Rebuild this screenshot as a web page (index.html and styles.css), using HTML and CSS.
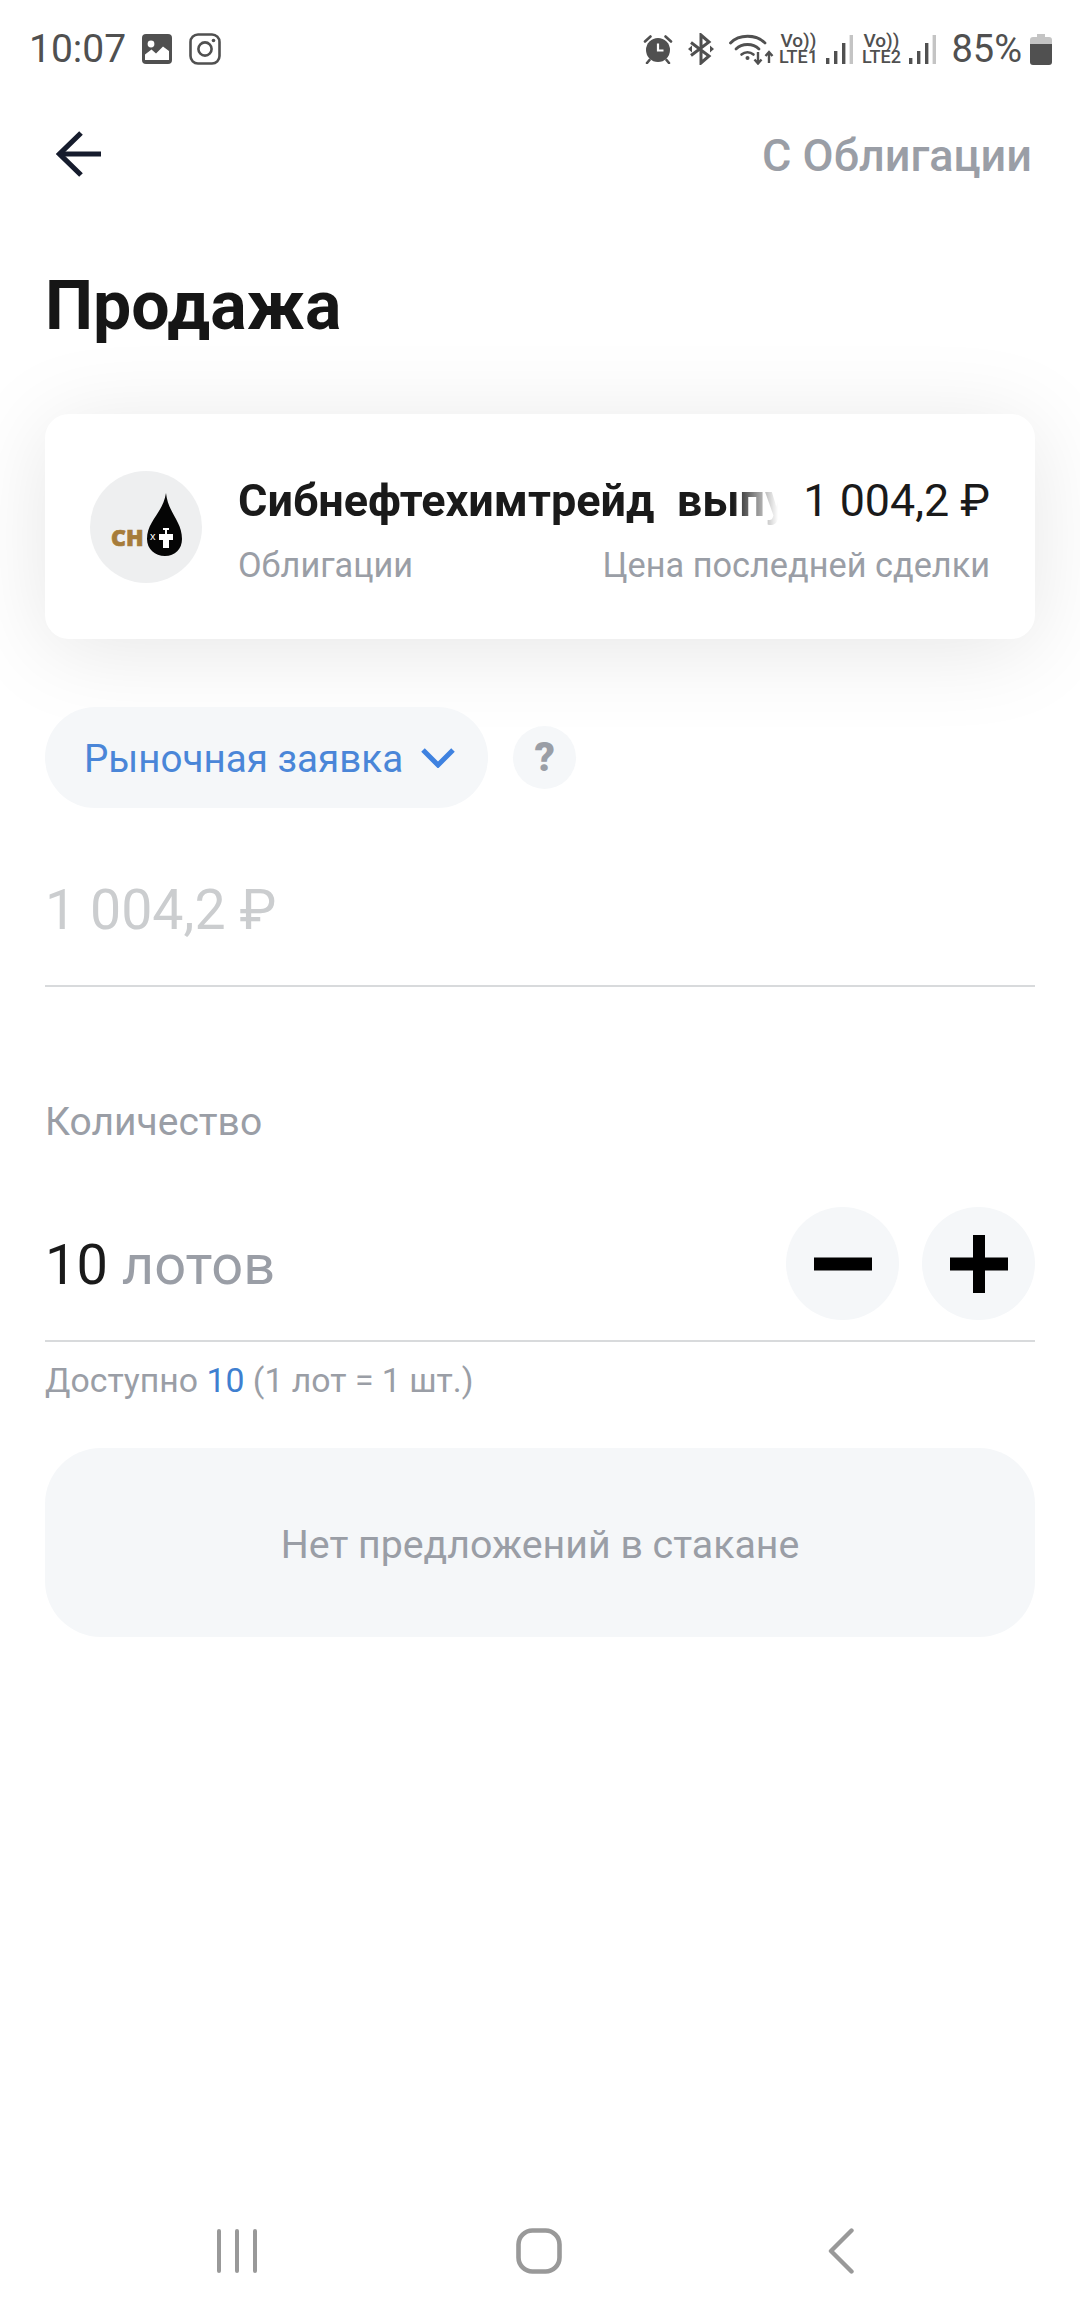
FILE: index.html
```html
<!DOCTYPE html>
<html lang="ru">
<head>
<meta charset="UTF-8">
<meta name="viewport" content="width=device-width, initial-scale=1.0">
<title>Продажа</title>
<link rel="stylesheet" href="styles.css">
</head>
<body>
<div class="app">

  <!-- статус-бар -->
  <div class="status">
    <span class="clock">10:07</span>
    <svg class="st-photo" width="30" height="30" viewBox="0 0 30 30">
      <rect width="30" height="30" rx="4" fill="#505050"/>
      <circle cx="9" cy="10" r="3.4" fill="#fff"/>
      <path d="M3 26V20.5L9.5 15.5 14 19.5 21 12.5 27 17V26Z" fill="#fff"/>
    </svg>
    <svg class="st-insta" width="32" height="32" viewBox="0 0 32 32" fill="none" stroke="#505050">
      <rect x="1.5" y="1.5" width="29" height="29" rx="7.5" stroke-width="2.6"/>
      <circle cx="16" cy="16" r="6.6" stroke-width="2.6"/>
      <circle cx="24.5" cy="7.5" r="1.8" fill="#505050" stroke="none"/>
    </svg>

    <div class="status-right">
      <svg class="st-alarm" width="30" height="30" viewBox="0 0 30 30">
        <circle cx="15" cy="16" r="12" fill="#505050"/>
        <path d="M15 9.5V16.5H20.5" fill="none" stroke="#fff" stroke-width="2.2"/>
        <path d="M2 7.5 7.5 2.5M28 7.5 22.5 2.5M6.5 26 4 29M23.5 26 26 29" stroke="#505050" stroke-width="2.6" stroke-linecap="round"/>
      </svg>
      <svg class="st-bt" width="26" height="32" viewBox="0 0 26 32" fill="none">
        <path d="M3 9.5 21 23 13 30V2L21 9 3 22.5" stroke="#505050" stroke-width="3"/>
        <path d="M0 16 4 12.5V19.5ZM26 16 22 12.5V19.5Z" fill="#505050"/>
      </svg>
      <svg class="st-wifi" width="46" height="32" viewBox="0 0 46 32" fill="none" stroke="#505050">
        <path d="M1.5 10C10 1 27 1 36 10" stroke-width="2.8" stroke-linecap="round"/>
        <path d="M7 16C13 10 24 10 30 16" stroke-width="2.8" stroke-linecap="round"/>
        <path d="M12.5 21.5C16 18.5 21 18.5 24.5 21.5" stroke-width="2.6" stroke-linecap="round"/>
        <circle cx="18.5" cy="25" r="2" fill="#505050" stroke="none"/>
        <path d="M29 19V30M25.5 26.5 29 30.5 32.5 26.5M40 30V19M36.5 23 40 19 43.5 23" stroke-width="2.4"/>
      </svg>
      <div class="st-lte st-lte1"><span class="vo">Vo))</span><span>LTE1</span></div>
      <svg class="st-signal" width="27" height="30" viewBox="0 0 27 30">
        <rect x="0" y="24" width="3.4" height="6" fill="#505050"/>
        <rect x="8" y="17" width="3.4" height="13" fill="#505050"/>
        <rect x="16" y="9" width="3.4" height="21" fill="#505050"/>
        <rect x="23.6" y="1" width="3.4" height="29" fill="#c4c4c4"/>
      </svg>
      <div class="st-lte st-lte2"><span class="vo">Vo))</span><span>LTE2</span></div>
      <svg class="st-signal st-signal2" width="27" height="30" viewBox="0 0 27 30">
        <rect x="0" y="24" width="3.4" height="6" fill="#505050"/>
        <rect x="8" y="17" width="3.4" height="13" fill="#505050"/>
        <rect x="16" y="9" width="3.4" height="21" fill="#505050"/>
        <rect x="23.6" y="1" width="3.4" height="29" fill="#c4c4c4"/>
      </svg>
      <span class="battery-text">85%</span>
      <svg class="st-battery" width="22" height="31" viewBox="0 0 22 31">
        <path d="M7 0H15V3H19A3 3 0 0 1 22 6V10H0V6A3 3 0 0 1 3 3H7Z" fill="#c4c4c4"/>
        <path d="M0 10H22V28A3 3 0 0 1 19 31H3A3 3 0 0 1 0 28Z" fill="#505050"/>
      </svg>
    </div>
  </div>

  <div class="content">
    <div class="topbar">
      <svg class="back" width="46" height="46" viewBox="0 0 46 46" fill="none" stroke="#161c2d" stroke-width="5.2">
        <path d="M45 23H3"/>
        <path d="M25 2 3.5 23 25 44"/>
      </svg>
      <span class="topbar-link">С Облигации</span>
    </div>

    <h1>Продажа</h1>

    <div class="card">
      <div class="logo">
        <svg width="112" height="112" viewBox="0 0 112 112">
          <path d="M76 22C73 42 57 50 57 68C57 78 65 85 75 85C85 85 92 78 92 68C92 50 78 42 76 22Z" fill="#050505"/>
          <text x="21" y="75" class="logo-ch">CH</text>
          <text x="60" y="69" class="logo-x">x</text>
          <path d="M73 57H79V59H77V63H83V69H79V77H73V69H69V63H75V59H73Z" fill="#fff"/>
        </svg>
      </div>
      <div class="card-text">
        <div class="card-row">
          <div class="bond-name">Сибнефтехимтрейд&nbsp; выпу</div>
          <div class="bond-price">1 004,2 ₽</div>
        </div>
        <div class="card-row card-sub">
          <span>Облигации</span>
          <span>Цена последней сделки</span>
        </div>
      </div>
    </div>

    <div class="order-type">
      <div class="pill">
        <span class="pill-text">Рыночная заявка</span>
        <svg width="34" height="20" viewBox="0 0 34 20" fill="none" stroke="#3f82e0" stroke-width="5">
          <path d="M2 2 17 17 32 2"/>
        </svg>
      </div>
      <div class="help">?</div>
    </div>

    <div class="price-input">1 004,2 ₽</div>

    <div class="qty-label">Количество</div>
    <div class="qty-row">
      <div class="qty-value">10 <span class="muted">лотов</span></div>
      <div class="qty-buttons">
        <div class="round-btn"><svg width="58" height="58" viewBox="0 0 58 58"><rect y="22.5" width="58" height="13"/></svg></div>
        <div class="round-btn"><svg width="58" height="58" viewBox="0 0 58 58"><rect y="22.5" width="58" height="13"/><rect x="23" width="12" height="58"/></svg></div>
      </div>
    </div>
    <div class="available">Доступно <span class="blue">10</span> (1 лот = 1 шт.)</div>

    <div class="empty-box">Нет предложений в стакане</div>
  </div>

  <!-- навигация -->
  <div class="navbar">
    <svg width="40" height="44" viewBox="0 0 40 44" stroke="#999" stroke-width="4" stroke-linecap="round">
      <path d="M2 2V42M20 2V42M38 2V42"/>
    </svg>
    <svg class="nav-home" width="46" height="46" viewBox="0 0 46 46" fill="none" stroke="#999" stroke-width="4.6">
      <rect x="2.5" y="2.5" width="41" height="41" rx="14"/>
    </svg>
    <svg width="26" height="46" viewBox="0 0 26 46" fill="none" stroke="#999" stroke-width="4.4" stroke-linecap="round" stroke-linejoin="round">
      <path d="M23.5 2.5 3 23 23.5 43.5"/>
    </svg>
  </div>
</div>
</body>
</html>
```

FILE: styles.css
```css
* {
  box-sizing: border-box;
}
body {
  margin: 0;
  background: #fff;
  font-family: 'Roboto', 'Liberation Sans', sans-serif;
  color: #1a1a1a;
}
.app {
  width: 1080px;
  height: 2316px;
  display: flex;
  flex-direction: column;
  overflow: hidden;
}

/* status bar */
.status {
  height: 98px;
  padding: 0 28px 0 29px;
  display: flex;
  align-items: center;
  color: #505050;
  flex-shrink: 0;
}
.clock {
  font-size: 39px;
}
.st-photo {
  margin-left: 16px;
}
.st-insta {
  margin-left: 17px;
}
.status-right {
  margin-left: auto;
  display: flex;
  align-items: center;
}
.st-bt {
  margin-left: 15px;
}
.st-wifi {
  margin-left: 15px;
}
.st-lte {
  margin-left: 3px;
  width: 40px;
  display: flex;
  flex-direction: column;
  align-items: center;
  font-size: 18px;
  font-weight: 500;
  line-height: 16px;
}
.st-lte .vo {
  font-size: 19px;
}
.st-signal {
  margin-left: 8px;
}
.st-lte2 {
  margin-left: 8px;
}
.st-signal2 {
  margin-left: 8px;
}
.battery-text {
  margin-left: 15px;
  font-size: 38px;
}
.st-battery {
  margin-left: 8px;
}

/* content */
.content {
  padding: 0 45px;
}
.topbar {
  height: 112px;
  display: flex;
  align-items: center;
  justify-content: space-between;
  padding: 0 3px 0 11px;
}
.topbar-link {
  padding-top: 2px;
  font-size: 45px;
  font-weight: 500;
  color: #9a9ea6;
}
h1 {
  margin: 42px 0 0;
  font-size: 68px;
  line-height: 108px;
  font-weight: 700;
  color: #161616;
}
.card {
  margin-top: 54px;
  height: 225px;
  padding: 0 45px 0 45px;
  display: flex;
  align-items: center;
  gap: 36px;
  background: #fff;
  border-radius: 24px;
  box-shadow: 0 10px 90px rgba(0, 0, 0, 0.1);
}
.logo {
  width: 112px;
  height: 112px;
  border-radius: 50%;
  background: #eeeff0;
  flex-shrink: 0;
}
.logo svg {
  display: block;
}
.logo-ch {
  font-family: 'Open Sans', sans-serif;
  font-size: 23px;
  font-weight: 800;
  fill: #a67c3a;
  stroke: #a67c3a;
  stroke-width: 0.7px;
}
.logo-x {
  font-family: 'Liberation Sans', sans-serif;
  font-size: 11px;
  fill: #fff;
}
.card-text {
  flex: 1;
  min-width: 0;
  padding-top: 12px;
}
.card-row {
  display: flex;
  justify-content: space-between;
  align-items: center;
  height: 65px;
}
.bond-name {
  flex: 1;
  min-width: 0;
  white-space: nowrap;
  margin-right: 25px;
  font-size: 45px;
  font-weight: 700;
  -webkit-mask-image: linear-gradient(to right, #000 calc(100% - 45px), transparent);
  mask-image: linear-gradient(to right, #000 calc(100% - 45px), transparent);
}
.bond-price {
  font-size: 44.8px;
  white-space: nowrap;
}
.card-sub {
  font-size: 34.3px;
  color: #9a9ea6;
}
.order-type {
  margin-top: 68px;
  display: flex;
  align-items: center;
  gap: 25px;
}
.pill {
  height: 101px;
  padding: 0 33px 0 39px;
  display: flex;
  align-items: center;
  gap: 18px;
  border-radius: 51px;
  background: #f5f7f9;
  color: #4a86d8;
  font-size: 38.6px;
}
.pill-text {
  padding-top: 2px;
}
.help {
  width: 63px;
  height: 63px;
  border-radius: 50%;
  background: #f5f7f9;
  color: #9a9ea6;
  font-size: 40px;
  font-weight: 900;
  line-height: 63px;
  text-align: center;
}
.price-input {
  margin-top: 67px;
  padding-bottom: 38px;
  border-bottom: 2px solid #d8dadc;
  font-size: 55.5px;
  line-height: 72px;
  color: #cbcdcf;
}
.qty-label {
  margin-top: 113px;
  font-size: 39px;
  line-height: 44px;
  color: #9a9ea6;
}
.qty-row {
  margin-top: 63px;
  padding-bottom: 20px;
  border-bottom: 2px solid #d8dadc;
  display: flex;
  align-items: center;
  justify-content: space-between;
}
.qty-value {
  padding-top: 3px;
  font-size: 56px;
}
.muted {
  color: #9a9ea6;
}
.qty-buttons {
  display: flex;
  gap: 23px;
}
.round-btn {
  width: 113px;
  height: 113px;
  border-radius: 50%;
  background: #f5f7f9;
  display: flex;
  align-items: center;
  justify-content: center;
}
.available {
  margin-top: 17px;
  font-size: 33.8px;
  line-height: 44px;
  color: #9a9ea6;
}
.blue {
  color: #3f7fd0;
}
.empty-box {
  margin-top: 45px;
  height: 189px;
  padding-top: 5px;
  border-radius: 56px;
  background: #f5f7f9;
  display: flex;
  align-items: center;
  justify-content: center;
  font-size: 39.3px;
  color: #9a9ea6;
}

/* bottom navigation */
.navbar {
  margin-top: auto;
  height: 130px;
  padding: 0 226px 0 217px;
  display: flex;
  align-items: center;
  justify-content: space-between;
  flex-shrink: 0;
}
.nav-home {
  margin-right: 8px;
}
```
